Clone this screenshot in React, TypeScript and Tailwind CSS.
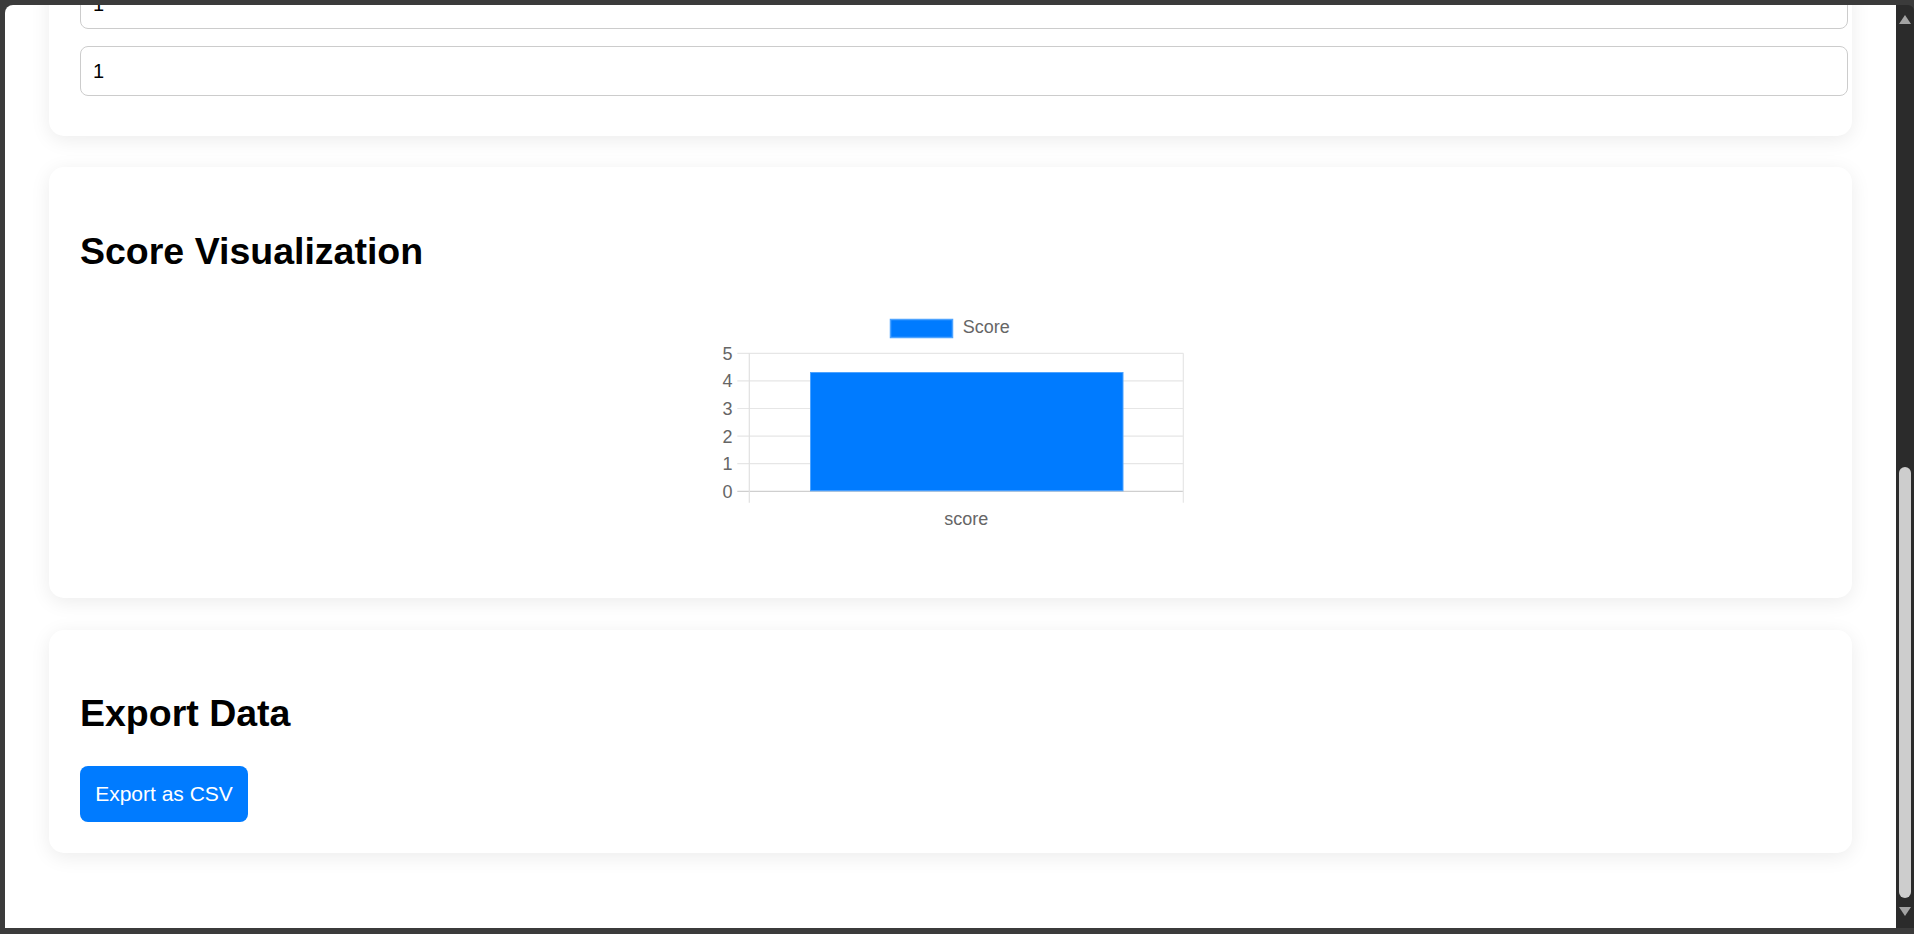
import React from "react";

function Chart() {
  const grid = [50.3, 77.9, 105.5, 133.1, 160.7, 188.3];
  const labels = ["5", "4", "3", "2", "1", "0"];
  return (
    <svg width="467" height="233" viewBox="0 0 467 233" className="mx-auto block">
      {/* legend */}
      <rect x="173.5" y="16.5" width="62" height="18" fill="#007bff" stroke="#4da3ff" strokeWidth="1.5" />
      <text x="245.7" y="30.3" fontSize="18" fill="#666" fontFamily="'Liberation Sans', Arial, sans-serif">Score</text>
      {/* grid lines */}
      {grid.map((y, i) => (
        <line key={i} x1="20.3" x2="466.3" y1={y} y2={y} stroke={i === 5 ? "#cfcfcf" : "#e6e6e6"} strokeWidth="1.2" />
      ))}
      <line x1="32.3" x2="32.3" y1="50.3" y2="199.7" stroke="#e0e0e0" strokeWidth="1.2" />
      <line x1="466.3" x2="466.3" y1="50.3" y2="199.7" stroke="#e6e6e6" strokeWidth="1.2" />
      {grid.map((y, i) => (
        <text key={i} x="15.5" y={y + 6.5} textAnchor="end" fontSize="18" fill="#666" fontFamily="'Liberation Sans', Arial, sans-serif">
          {labels[i]}
        </text>
      ))}
      {/* bar */}
      <rect x="93.5" y="69.5" width="312.5" height="118.3" fill="#007bff" stroke="#4da3ff" strokeWidth="1" />
      <text x="249.3" y="222" textAnchor="middle" fontSize="18" fill="#666" fontFamily="'Liberation Sans', Arial, sans-serif">score</text>
    </svg>
  );
}

export default function App() {
  return (
    <div className="w-[1914px] h-[934px] bg-[#3b3b3b] pt-[5px] pl-[5px] pb-[6px] flex overflow-hidden font-['Liberation_Sans',Arial,sans-serif]">
      <div className="flex-1 h-full bg-white rounded-tl-[8px] overflow-hidden">
        <div className="px-[44px] flex flex-col">
          {/* Card 1 (scrolled, partially visible) */}
          <div className="mt-[-26px] bg-white rounded-[15px] shadow-[0_4px_20px_rgba(0,0,0,0.08)] px-[31px] pb-[40px]">
            <input
              readOnly
              value="1"
              className="block w-[calc(100%+27px)] h-[50px] px-[12px] border-[1.5px] border-[#cccccc] rounded-[8px] font-['Liberation_Sans',Arial,sans-serif] text-[20px] text-black outline-none bg-white"
            />
            <input
              readOnly
              value="1"
              className="block mt-[17px] w-[calc(100%+27px)] h-[50px] px-[12px] border-[1.5px] border-[#cccccc] rounded-[8px] font-['Liberation_Sans',Arial,sans-serif] text-[20px] text-black outline-none bg-white"
            />
          </div>

          {/* Card 2 */}
          <div className="mt-[31px] bg-white rounded-[15px] shadow-[0_4px_20px_rgba(0,0,0,0.08)] px-[31px] pt-[31px] pb-[31px]">
            <h2 className="mt-[32px] mb-[31px] text-[37.5px] leading-[42px] font-bold text-black">Score Visualization</h2>
            <div className="mb-[31px]">
              <Chart />
            </div>
          </div>

          {/* Card 3 */}
          <div className="mt-[32px] bg-white rounded-[15px] shadow-[0_4px_20px_rgba(0,0,0,0.08)] px-[31px] pt-[31px] pb-[31px]">
            <h2 className="mt-[31px] mb-[32px] text-[37.5px] leading-[42px] font-bold text-black">Export Data</h2>
            <button className="h-[56px] w-[168px] bg-[#007bff] text-white text-[21px] rounded-[8px] flex items-center justify-center">
              Export as CSV
            </button>
          </div>
        </div>
      </div>

      {/* Scrollbar */}
      <div className="w-[18px] h-full bg-[#2b2b2b] rounded-tr-[6px] flex flex-col items-center">
        <svg width="12" height="9" viewBox="0 0 12 9" className="mt-[10px] block">
          <polygon points="6,0 12,9 0,9" fill="#a3a3a3" />
        </svg>
        <div className="mt-[443px] w-[12px] h-[431px] rounded-full bg-[#cdcdcd]" />
        <svg width="12" height="9" viewBox="0 0 12 9" className="mt-[9px] block">
          <polygon points="0,0 12,0 6,9" fill="#a3a3a3" />
        </svg>
      </div>
    </div>
  );
}
